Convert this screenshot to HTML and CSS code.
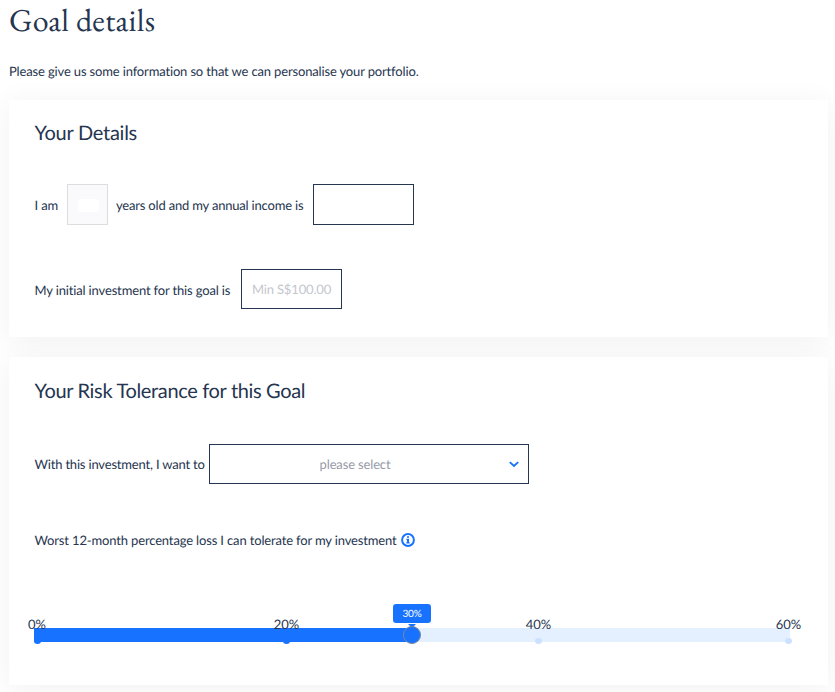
FILE: index.html
```html
<!DOCTYPE html>
<html lang="en">
<head>
<meta charset="utf-8">
<title>Goal details</title>
<link rel="stylesheet" href="styles.css">
</head>
<body>
<main class="page">
  <h1 class="title"><span>Goal details</span></h1>
  <p class="intro">Please give us some information so that we can personalise your portfolio.</p>
  <section class="card card-details">
    <h2>Your Details</h2>
    <div class="row row-age">
      <span class="label-age">I am</span>
      <div class="field field-age"><span class="age-mask"></span></div>
      <span class="label-income">years old and my annual income is</span>
      <div class="field field-income"></div>
    </div>
    <div class="row row-invest">
      <span class="label-invest">My initial investment for this goal is</span>
      <div class="field field-invest">Min S$100.00</div>
    </div>
  </section>
  <section class="card card-risk">
    <h2>Your Risk Tolerance for this Goal</h2>
    <div class="row row-select">
      <span class="label-select">With this investment, I want to</span>
      <div class="field select"><span>please select</span>
        <svg class="chevron" width="10" height="7" viewBox="0 0 10 7"><path d="M.8 1.1 5 5 9.2 1.1" fill="none" stroke="#1773ff" stroke-width="1.9"/></svg>
      </div>
    </div>
    <div class="row row-loss">
      <span>Worst 12-month percentage loss I can tolerate for my investment</span>
      <svg class="info" width="14" height="14" viewBox="0 0 14 14"><circle cx="7" cy="7" r="5.9" fill="none" stroke="#1773ff" stroke-width="2"/><path d="M6 3.2h2v1.6H6zM5.4 5.8H8v3.4h.7v1.2H5.3V9.2H6V7h-.6z" fill="#1773ff"/></svg>
    </div>
    <div class="slider">
      <div class="track"><div class="fill"></div></div>
      <i class="dot on p0"></i><i class="dot on p20"></i><i class="dot p40"></i><i class="dot p60"></i>
      <span class="mark p0">0%</span><span class="mark p20">20%</span><span class="mark p40">40%</span><span class="mark p60">60%</span>
      <div class="tip">30%</div>
      <div class="handle"></div>
    </div>
  </section>
</main>
</body>
</html>
```
FILE: styles.css
```css
* { box-sizing: border-box; }
body {
  margin: 0;
  height: 692px;
  overflow: hidden;
  background: #fff;
  color: #263550;
  font: 13px/20px Lato, sans-serif;
  letter-spacing: -.15px;
  text-rendering: geometricPrecision;
  font-variant-ligatures: none;
}
.page { padding: 0 7px 0 9px; isolation: isolate; }
.title {
  margin: 0;
  height: 61px;
  font: 400 32px/40px "EB Garamond", Cardo, "Liberation Serif", serif;
  letter-spacing: .3px;
}
.intro { margin: 0; height: 39px; white-space: nowrap; }
.card { position: relative; padding: 0 26px 0 25.5px; }
.card::before {
  content: "";
  position: absolute;
  inset: 0;
  z-index: -2;
  box-shadow: 0 4px 28px rgba(0, 0, 0, .06);
}
.card::after {
  content: "";
  position: absolute;
  inset: 0;
  z-index: -1;
  background: #fff;
  border-radius: 2px;
}
.card-details { height: 237px; margin-bottom: 20px; }
.card-risk { height: 328px; }
h2 {
  margin: 0;
  padding-top: 22px;
  font-size: 20px;
  line-height: 25px;
  font-weight: 400;
  letter-spacing: -.34px;
}
.card-details h2 { padding-top: 21px; letter-spacing: -.26px; }
.row { display: flex; align-items: center; white-space: nowrap; }
.field {
  flex: none;
  display: flex;
  align-items: center;
  justify-content: center;
  height: 40px;
  border: 1px solid #263550;
}
.row-age { margin-top: 38px; height: 41px; }
.label-age { width: 32.5px; }
.field-age { width: 41px; height: 41px; background: #fafafc; border-color: #ddd; }
.age-mask { width: 21px; height: 13px; background: #fff; border-radius: 3px; margin: 2px 0 0 1px; }
.label-income { width: 197px; margin-left: 8px; letter-spacing: -.19px; }
.field-income { width: 101px; height: 41px; }
.row-invest { margin-top: 44px; height: 40px; }
.label-invest { width: 206.5px; padding-top: 2px; }
.field-invest { width: 101px; color: #c4c6ce; }
.row-select { margin-top: 40px; height: 40px; }
.label-select { width: 174.5px; letter-spacing: -.18px; }
.select { position: relative; width: 320px; color: #969ba8; padding-right: 28px; }
.chevron { position: absolute; right: 9px; top: 16px; }
.row-loss { margin-top: 46px; height: 20px; gap: 4px; }
.info { margin-top: -1px; }
.slider { position: relative; width: 756px; height: 14px; margin: 78px 0 0 -.5px; }
.track { height: 14px; background: #e4efff; }
.fill { width: 50%; height: 14px; background: #1773ff; }
.dot {
  position: absolute;
  top: 10px;
  width: 7px;
  height: 6px;
  margin-left: -3.5px;
  border-radius: 50%;
  background: #cce0ff;
}
.dot.on { background: #1773ff; }
.mark {
  position: absolute;
  top: -14px;
  width: 50px;
  margin-left: -24.5px;
  text-align: center;
  letter-spacing: 0;
}
.p0 { left: 3px; }
.p20 { left: 252px; }
.p40 { left: 504px; }
.p60 { left: 754px; }
.mark.p0 { left: 2.5px; }
.tip {
  position: absolute;
  left: 359px;
  top: -24px;
  width: 38px;
  height: 19px;
  border-radius: 3px;
  background: #1773ff;
  color: #fff;
  font-size: 10px;
  line-height: 20px;
  text-align: center;
}
.tip::after {
  content: "";
  position: absolute;
  left: 15px;
  top: 20px;
  border: 4px solid transparent;
  border-top-color: #1773ff;
  border-bottom: 0;
}
.handle {
  position: absolute;
  left: 369px;
  top: -2px;
  width: 18px;
  height: 18px;
  border: 1px solid #7b8798;
  border-radius: 50%;
  background: #1773ff;
}
```
